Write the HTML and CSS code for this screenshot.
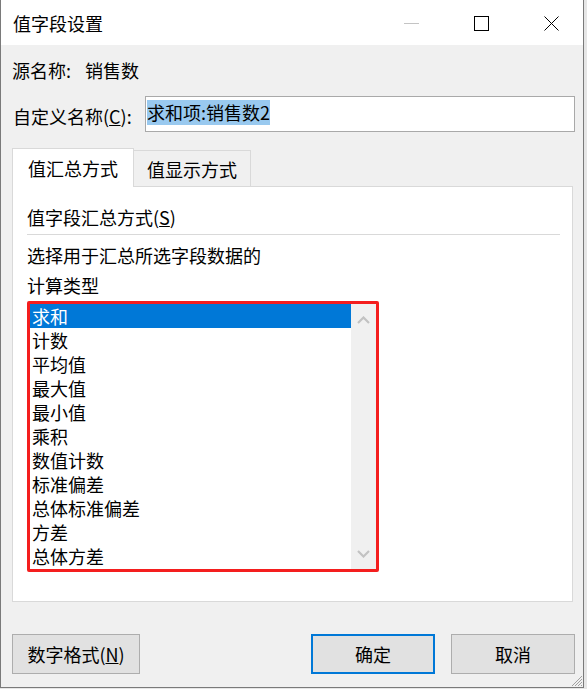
FILE: index.html
```html
<!DOCTYPE html>
<html lang="zh-CN">
<head>
<meta charset="utf-8">
<title>值字段设置</title>
<link rel="stylesheet" href="styles.css">
</head>
<body>
<div class="window">
  <div class="titlebar">
    <span class="title">值字段设置</span>
    <div class="controls">
      <svg class="ctl" width="15" height="15" viewBox="0 0 15 15"><line x1="0" y1="7.5" x2="15" y2="7.5" stroke="#c4c4c4" stroke-width="1"/></svg>
      <svg class="ctl" width="15" height="15" viewBox="0 0 15 15"><rect x="0.5" y="0.5" width="14" height="14" fill="none" stroke="#000" stroke-width="1"/></svg>
      <svg class="ctl" width="15" height="15" viewBox="0 0 15 15"><path d="M0.5 0.5 L14.5 14.5 M14.5 0.5 L0.5 14.5" stroke="#000" stroke-width="1" fill="none"/></svg>
    </div>
  </div>
  <div class="content">
    <div class="row-src"><span>源名称:</span><span class="src-val">销售数</span></div>
    <div class="row-name">
      <span class="name-label">自定义名称(<u>C</u>):</span>
      <div class="textbox"><span class="sel">求和项:销售数2</span></div>
    </div>
    <div class="tabs">
      <div class="tab active">值汇总方式</div>
      <div class="tab">值显示方式</div>
    </div>
    <div class="panel">
      <div class="group-title">值字段汇总方式(<u>S</u>)</div>
      <div class="sep"></div>
      <div class="desc desc-first">选择用于汇总所选字段数据的</div>
      <div class="desc">计算类型</div>
      <div class="listbox">
        <ul class="items">
          <li class="selected">求和</li>
          <li>计数</li>
          <li>平均值</li>
          <li>最大值</li>
          <li>最小值</li>
          <li>乘积</li>
          <li>数值计数</li>
          <li>标准偏差</li>
          <li>总体标准偏差</li>
          <li>方差</li>
          <li>总体方差</li>
        </ul>
        <div class="scrollbar">
          <svg width="13" height="8" viewBox="0 0 13 8"><polyline points="1,7 6.5,1.5 12,7" fill="none" stroke="#c2c2c2" stroke-width="2.2"/></svg>
          <svg width="13" height="8" viewBox="0 0 13 8"><polyline points="1,1 6.5,6.5 12,1" fill="none" stroke="#c2c2c2" stroke-width="2.2"/></svg>
        </div>
      </div>
    </div>
    <div class="buttons">
      <div class="btn btn-format">数字格式(<u>N</u>)</div>
      <div class="btn-group">
        <div class="btn btn-default">确定</div>
        <div class="btn">取消</div>
      </div>
    </div>
  </div>
  <svg class="grip" width="13" height="13" viewBox="0 0 13 13">
    <path d="M12 2 L2 12 M12 5 L5 12 M12 8 L8 12 M12 11 L11 12" stroke="#a0a0a0" stroke-width="1" fill="none"/>
  </svg>
</div>
</body>
</html>
```
FILE: styles.css
```css
* { box-sizing: border-box; }
html, body { margin: 0; padding: 0; }
body {
  background: #e6e6e6;
  font-family: "Noto Sans CJK SC", "Noto Sans", sans-serif;
  font-size: 18px;
  color: #000;
}
.window {
  position: relative;
  width: 584px;
  height: 688px;
  background: #f0f0f0;
  border-left: 1px solid #7a7a7a;
  border-right: 1px solid #7a7a7a;
  border-bottom: 1px solid #7a7a7a;
}
.titlebar {
  height: 45px;
  background: #fff;
  display: flex;
  align-items: center;
  justify-content: space-between;
  padding-left: 12px;
  padding-right: 24px;
}
.title { line-height: 24px; }
.controls {
  display: flex;
  align-items: center;
  gap: 55px;
  padding-top: 1px;
}
.ctl { display: block; }
.row-src {
  margin-top: 13px;
  padding-left: 11px;
  line-height: 24px;
  height: 24px;
  display: flex;
}
.src-val { margin-left: 14px; }
.row-name {
  margin-top: 14px;
  padding-left: 12px;
  display: flex;
  align-items: center;
  height: 36px;
}
.name-label {
  width: 132px;
  line-height: 24px;
  padding-top: 3px;
}
.textbox {
  width: 430px;
  height: 36px;
  background: #fff;
  border: 1px solid #a9a9a9;
  padding: 2px 1px;
}
.sel {
  display: inline-block;
  background: #99c9ef;
  line-height: 25px;
  height: 25px;
}
.tabs {
  margin-top: 16px;
  margin-left: 11px;
  height: 38px;
  display: flex;
  align-items: flex-end;
}
.tab {
  height: 36px;
  padding: 1px 13px 0 13px;
  border: 1px solid #d9d9d9;
  border-bottom: none;
  border-left: none;
  background: #f0f0f0;
  line-height: 34px;
  white-space: nowrap;
}
.tab.active {
  height: 39px;
  margin-bottom: -1px;
  padding: 2px 15px 0 15px;
  border-left: 1px solid #d9d9d9;
  background: #fff;
  position: relative;
  z-index: 1;
}
.panel {
  margin-left: 11px;
  width: 561px;
  height: 416px;
  background: #fff;
  border: 1px solid #d9d9d9;
  padding: 18px 12px 0 14px;
}
.group-title { line-height: 24px; }
.sep {
  margin-top: 5px;
  height: 1px;
  background: #d9d9d9;
}
.desc { line-height: 30px; }
.desc-first { margin-top: 5px; }
.listbox {
  margin-top: 1px;
  width: 352px;
  height: 271px;
  border: 3px solid #f41e1e;
  border-radius: 2px;
  display: flex;
  background: #fff;
}
.items {
  list-style: none;
  margin: 0;
  padding: 0;
  flex: 1;
}
.items li {
  height: 24px;
  line-height: 24px;
  padding-left: 2px;
}
.items li.selected {
  background: #0078d7;
  color: #fff;
}
.scrollbar {
  width: 25px;
  background: #f0f0f0;
  display: flex;
  flex-direction: column;
  align-items: center;
  justify-content: space-between;
  padding: 12px 0 11px 0;
}
.scrollbar svg { display: block; }
.buttons {
  margin-top: 32px;
  padding-left: 11px;
  padding-right: 8px;
  display: flex;
  justify-content: space-between;
}
.btn-group {
  display: flex;
  gap: 16px;
}
.btn {
  width: 124px;
  height: 40px;
  background: #e1e1e1;
  border: 1px solid #adadad;
  display: flex;
  align-items: center;
  justify-content: center;
  line-height: 24px;
}
.btn-format { width: 128px; }
.btn-default { border: 2px solid #0078d7; }
.grip {
  position: absolute;
  right: 0;
  bottom: 0;
}
```
